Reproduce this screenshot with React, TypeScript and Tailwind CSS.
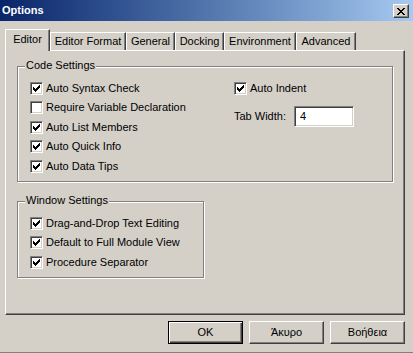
const CODE_OPTIONS = [
  { label: "Auto Syntax Check", checked: true, h: "h-[20px]" },
  { label: "Require Variable Declaration", checked: false, h: "h-[19px]" },
  { label: "Auto List Members", checked: true, h: "h-[20px]" },
  { label: "Auto Quick Info", checked: true, h: "h-[19px]" },
  { label: "Auto Data Tips", checked: true, h: "h-[20px]" },
];

const WINDOW_OPTIONS = [
  { label: "Drag-and-Drop Text Editing", checked: true, h: "h-[20px]" },
  { label: "Default to Full Module View", checked: true, h: "h-[19px]" },
  { label: "Procedure Separator", checked: true, h: "h-[20px]" },
];

const TABS = [
  { name: "Editor Format", w: "w-[76px]" },
  { name: "General", w: "w-[49px]" },
  { name: "Docking", w: "w-[49px]" },
  { name: "Environment", w: "w-[72px]" },
  { name: "Advanced", w: "w-[60px]" },
];

function CheckBox({ checked }: { checked: boolean }) {
  return (
    <span className="flex h-[13px] w-[13px] shrink-0 items-center justify-center border border-t-[#808080] border-l-[#808080] border-b-white border-r-white bg-white shadow-[inset_1px_1px_0_#404040,inset_-1px_-1px_0_#d4d0c8]">
      {checked && (
        <svg width="7" height="7" viewBox="0 0 7 7" shapeRendering="crispEdges">
          <path
            fill="#000"
            d="M6 0h1v1H6z M5 1h2v1H5z M0 2h1v1H0z M4 2h3v1H4z M0 3h2v1H0z M3 3h3v1H3z M0 4h5v1H0z M1 5h3v1H1z M2 6h1v1H2z"
          />
        </svg>
      )}
    </span>
  );
}

function CheckRow({ label, checked, h }: { label: string; checked: boolean; h: string }) {
  return (
    <div className={`flex items-center gap-[3px] ${h}`}>
      <CheckBox checked={checked} />
      <span className="whitespace-nowrap leading-[13px]">{label}</span>
    </div>
  );
}

function GroupBox({ title, className, children }: { title: string; className: string; children: React.ReactNode }) {
  return (
    <div className={`relative border border-[#808080] shadow-[1px_1px_0_#fff,inset_1px_1px_0_#fff] ${className}`}>
      <span className="absolute left-[7px] top-[-8px] bg-[#d4d0c8] px-[1px] leading-[13px] whitespace-nowrap">
        {title}
      </span>
      {children}
    </div>
  );
}

function Button({ label, isDefault }: { label: string; isDefault?: boolean }) {
  return (
    <div
      className={`flex h-[23px] w-[75px] items-center justify-center bg-[#d4d0c8] border ${
        isDefault
          ? "border-black shadow-[inset_1px_1px_0_#fff,inset_-1px_-1px_0_#404040,inset_-2px_-2px_0_#808080]"
          : "border-t-white border-l-white border-r-[#404040] border-b-[#404040] shadow-[inset_-1px_-1px_0_#808080]"
      }`}
    >
      {label}
    </div>
  );
}

export default function App() {
  return (
    <div className="flex h-[353px] w-[413px] flex-col border-b border-[#808080] bg-[#d4d0c8] font-['Liberation_Sans',Arial,sans-serif] text-[11px] text-black">
      {/* title bar */}
      <div className="flex h-[21px] shrink-0 items-start justify-between bg-linear-to-r from-[#0a246a] to-[#a6caf0]">
        <span className="pl-[2px] pt-[3px] text-[11px] font-bold leading-[14px] text-white">Options</span>
        <div className="mr-[4px] mt-[4px] flex h-[14px] w-[16px] items-center justify-center border border-t-white border-l-white border-r-[#404040] border-b-[#404040] bg-[#d4d0c8] shadow-[inset_-1px_-1px_0_#808080]">
          <svg width="8" height="7" viewBox="0 0 8 7" shapeRendering="crispEdges">
            <path
              fill="#000"
              d="M0 0h2v1H0z M6 0h2v1H6z M1 1h2v1H1z M5 1h2v1H5z M2 2h4v1H2z M3 3h2v1H3z M2 4h4v1H2z M1 5h2v1H1z M5 5h2v1H5z M0 6h2v1H0z M6 6h2v1H6z"
            />
          </svg>
        </div>
      </div>

      {/* tabs */}
      <div className="mt-[8px] flex h-[21px] items-end pl-[5px]">
        <div className="relative z-10 -mb-[1px] flex h-[22px] w-[45px] items-center justify-center border-l border-t border-l-white border-t-white border-r border-r-[#404040] bg-[#d4d0c8] pb-[2px] shadow-[inset_-1px_0_0_#808080]">
          Editor
        </div>
        {TABS.map((tab) => (
          <div
            key={tab.name}
            className={`flex h-[18px] ${tab.w} items-center justify-center border-l border-t border-l-white border-t-white border-r border-r-[#404040] shadow-[inset_-1px_0_0_#808080] whitespace-nowrap`}
          >
            {tab.name}
          </div>
        ))}
      </div>

      {/* tab panel */}
      <div className="ml-[5px] flex h-[265px] w-[400px] flex-col border border-t-white border-l-white border-r-[#404040] border-b-[#404040] pl-[11px] pt-[15px] shadow-[inset_-1px_-1px_0_#808080]">
        <GroupBox title="Code Settings" className="h-[116px] w-[376px]">
          <div className="flex pl-[12px] pt-[11px]">
            <div className="flex w-[204px] flex-col">
              {CODE_OPTIONS.map((o) => (
                <CheckRow key={o.label} {...o} />
              ))}
            </div>
            <div className="flex flex-col">
              <CheckRow label="Auto Indent" checked={true} h="h-[20px]" />
              <div className="mt-[8px] flex h-[21px] items-center">
                <span className="w-[60px] whitespace-nowrap">Tab Width:</span>
                <div className="flex h-[21px] w-[60px] items-center border border-t-[#808080] border-l-[#808080] border-b-white border-r-white bg-white pl-[5px] shadow-[inset_1px_1px_0_#404040,inset_-1px_-1px_0_#d4d0c8]">
                  4
                </div>
              </div>
            </div>
          </div>
        </GroupBox>

        <GroupBox title="Window Settings" className="mt-[19px] h-[77px] w-[187px]">
          <div className="flex flex-col pl-[12px] pt-[11px]">
            {WINDOW_OPTIONS.map((o) => (
              <CheckRow key={o.label} {...o} />
            ))}
          </div>
        </GroupBox>
      </div>

      {/* buttons */}
      <div className="mt-[6px] flex justify-end gap-[6px] pr-[8px]">
        <Button label="OK" isDefault />
        <Button label="Άκυρο" />
        <Button label="Βοήθεια" />
      </div>
    </div>
  );
}
